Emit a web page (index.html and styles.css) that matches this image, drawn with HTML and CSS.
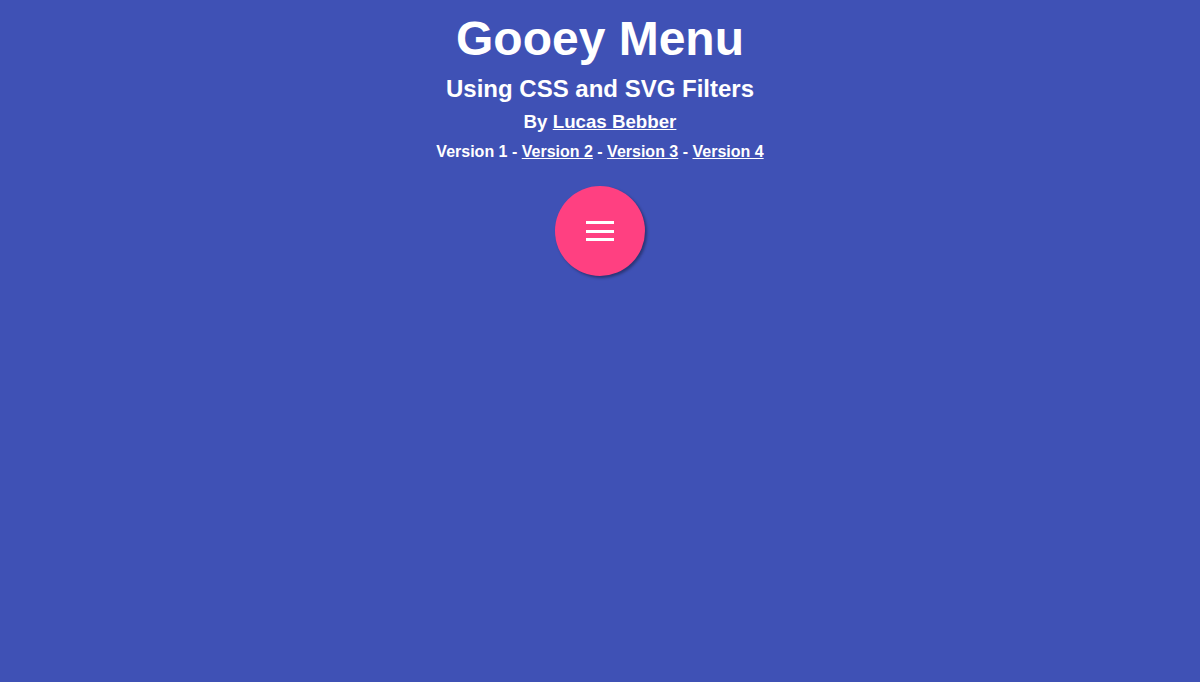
FILE: index.html
```html
<!DOCTYPE html>
<html lang="en">
<head>
<meta charset="utf-8">
<title>Gooey Menu</title>
<link rel="stylesheet" href="styles.css">
</head>
<body>
<header class="header">
  <h1 class="title">Gooey Menu</h1>
  <h2 class="subtitle">Using CSS and SVG Filters</h2>
  <h3 class="author">By <a href="#" class="link">Lucas Bebber</a></h3>
  <h4 class="versions">Version 1 - <a href="#" class="link">Version 2</a> - <a href="#" class="link">Version 3</a> - <a href="#" class="link">Version 4</a></h4>
</header>
<nav class="menu">
  <button class="menu-button" type="button" aria-label="Open menu">
    <span class="bar"></span>
    <span class="bar"></span>
    <span class="bar"></span>
  </button>
</nav>
</body>
</html>
```
FILE: styles.css
```css
html, body {
  margin: 0;
  padding: 0;
}
body {
  background: #3f51b5;
  color: #ffffff;
  font-family: "Liberation Sans", Arial, sans-serif;
  height: 682px;
  overflow: hidden;
}
.header {
  display: flex;
  flex-direction: column;
  align-items: center;
  text-align: center;
  padding-top: 11px;
}
.title, .subtitle, .author, .versions {
  margin: 0;
  font-weight: bold;
  line-height: normal;
}
.title {
  font-size: 48px;
  margin-bottom: 9px;
}
.subtitle {
  font-size: 24px;
  margin-bottom: 8px;
}
.author {
  font-size: 18.72px;
  margin-bottom: 10px;
}
.versions {
  font-size: 16px;
}
.link {
  color: #ffffff;
  text-decoration: underline;
}
.menu {
  display: flex;
  justify-content: center;
  padding-top: 25px;
}
.menu-button {
  width: 90px;
  height: 90px;
  border-radius: 50%;
  border: none;
  padding: 0;
  background: #ff4081;
  box-shadow: 2px 2px 3px rgba(0, 0, 0, 0.35);
  display: flex;
  flex-direction: column;
  align-items: center;
  justify-content: center;
  gap: 5.5px;
  cursor: pointer;
}
.bar {
  display: block;
  width: 28px;
  height: 3px;
  background: #ffffff;
}
```
